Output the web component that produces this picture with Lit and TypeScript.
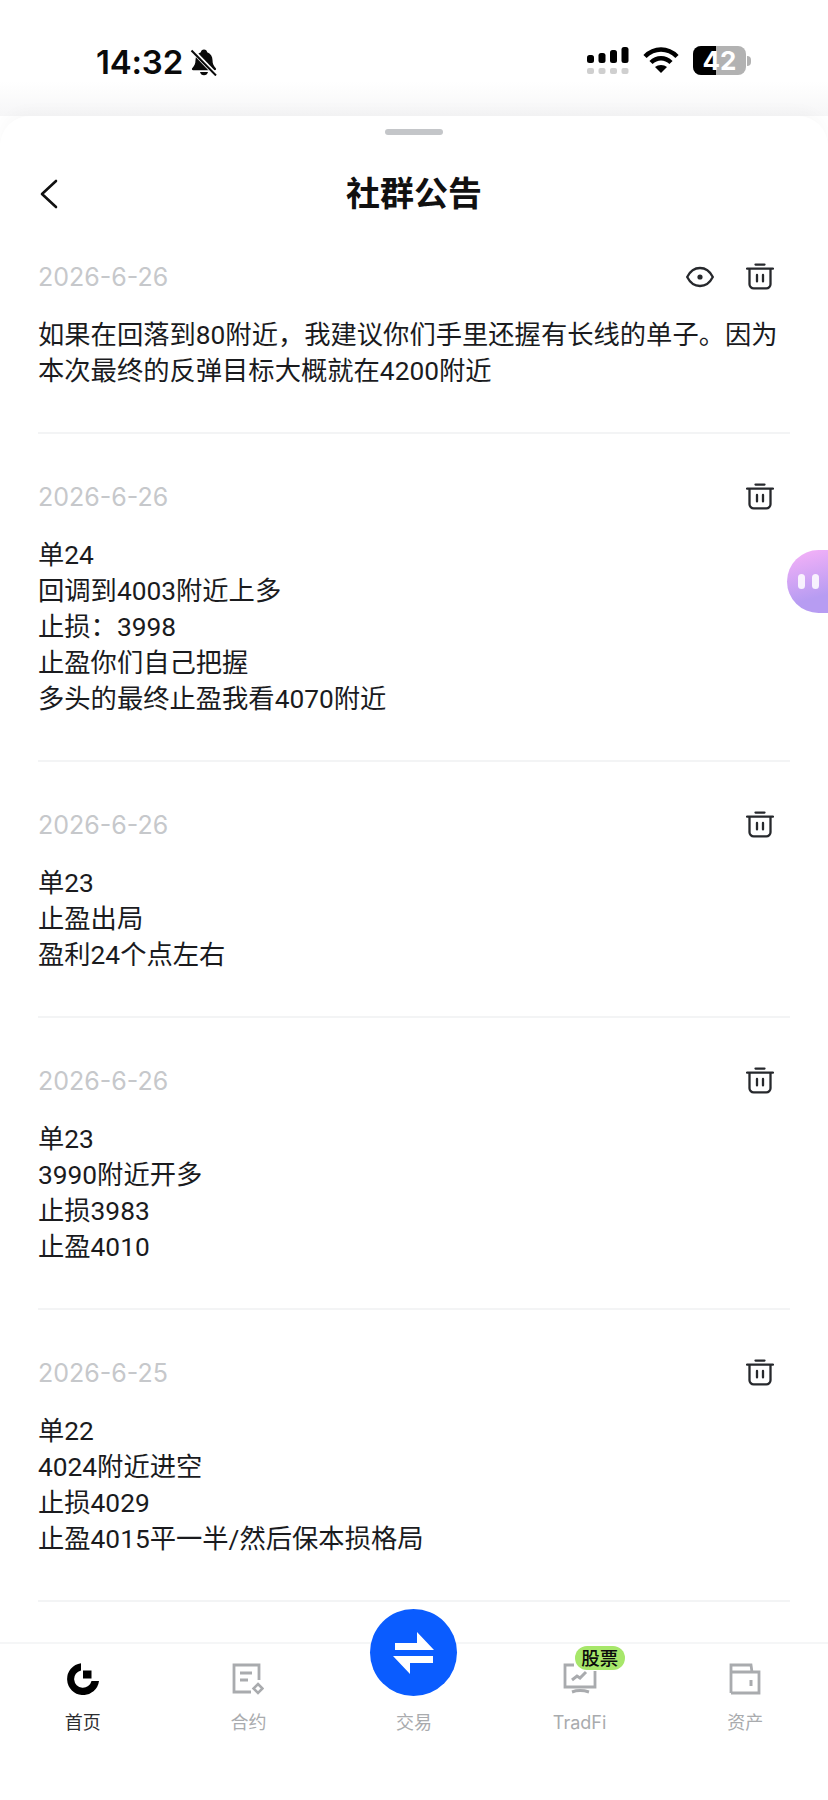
import { LitElement, html, css, svg } from "lit";
import { customElement } from "lit/decorators.js";

const items = [
  { date: "2026-6-26", eye: true, lines: ["如果在回落到80附近，我建议你们手里还握有长线的单子。因为本次最终的反弹目标大概就在4200附近"] },
  { date: "2026-6-26", lines: ["单24", "回调到4003附近上多", "止损：3998", "止盈你们自己把握", "多头的最终止盈我看4070附近"] },
  { date: "2026-6-26", lines: ["单23", "止盈出局", "盈利24个点左右"] },
  { date: "2026-6-26", lines: ["单23", "3990附近开多", "止损3983", "止盈4010"] },
  { date: "2026-6-25", lines: ["单22", "4024附近进空", "止损4029", "止盈4015平一半/然后保本损格局"] },
];

const trash = svg`<svg class="ic" width="28" height="28" viewBox="0 0 28 28" fill="none" stroke="#26282c" stroke-width="2.3" stroke-linecap="round" stroke-linejoin="round"><path d="M9.5 1.6h9M1 5.6h26M3.5 5.800v15.400a4.200 4.200 0 0 0 4.200 4.200h12.600a4.200 4.200 0 0 0 4.200-4.200V5.800M11 12v6.400M17 12v6.400"/></svg>`;
const eye = svg`<svg class="ic" width="28" height="22" viewBox="0 0 28 22" fill="none" stroke="#26282c" stroke-width="2.3"><path d="M1.200 11C4 5.400 8.600 2 14 2s10 3.400 12.800 9c-2.800 5.600-7.400 9-12.800 9S4 16.600 1.200 11Z"/><circle cx="14" cy="11" r="2.600" fill="#26282c" stroke="none"/></svg>`;

@customElement("app-root")
export class AppRoot extends LitElement {
  static styles = css`
    :host { display: block; width: 828px; height: 1800px; position: relative; overflow: hidden; background: #fff; font-family: Inter, "Noto Sans CJK SC", sans-serif; }
    .root { height: 1800px; display: flex; flex-direction: column; background: #fff; }
    .status { height: 116px; flex: none; display: flex; justify-content: space-between; background: linear-gradient(#fff 70%, #f6f6f7); }
    .left { display: flex; gap: 7px; padding: 44px 0 0 96px; align-items: flex-start; }
    .time { font-size: 33px; line-height: 37px; font-weight: 600; color: #0a0a0a; letter-spacing: -0.2px; }
    .bell { margin-top: 4px; }
    .right { display: flex; padding: 46px 0 0 0; margin-right: 82px; align-items: flex-start; gap: 14px; }
    .batt { position: relative; width: 53px; height: 29px; border-radius: 8px; overflow: hidden; background: #b2b2b2; display: flex; align-items: center; justify-content: center; color: #fff; font-size: 26px; font-weight: 700; }
    .batt i { position: absolute; left: 0; top: 0; bottom: 0; width: 23px; background: #000; }
    .batt span { position: relative; }
    .tip { position: absolute; left: 747px; top: 56px; width: 4px; height: 10px; border-radius: 0 4px 4px 0; background: #b2b2b2; }
    .sheet { flex: 1; min-height: 0; display: flex; flex-direction: column; background: #fff; border-radius: 30px 30px 0 0; box-shadow: 0 -6px 14px rgba(0,0,0,.025); overflow: hidden; }
    .handle { flex: none; width: 58px; height: 6px; border-radius: 3px; background: #c4c6c9; margin: 13px auto 0; }
    .head { flex: none; height: 72px; margin-top: 23px; display: flex; align-items: center; justify-content: center; position: relative; }
    .head h1 { margin: 0; font-size: 34px; font-weight: 600; color: #111; line-height: 44px; }
    .back { position: absolute; left: 38px; top: 21px; }
    .list { flex: 1; min-height: 0; overflow: hidden; padding: 0 38px; }
    .item { padding-top: 29px; padding-bottom: 43px; border-bottom: 2px solid #f3f4f5; }
    .item + .item { padding-top: 45px; }
    .meta { display: flex; align-items: center; justify-content: space-between; height: 36px; }
    .date { font-size: 25px; color: #c6c8cb; line-height: 36px; }
    .acts { display: flex; align-items: center; gap: 32px; margin-right: 16px; }
    .body { margin-top: 22px; font-family: Roboto, "Noto Sans CJK SC", sans-serif; font-size: 26.300px; line-height: 36px; color: #1a1b1e; }
    nav { flex: none; height: 156px; border-top: 2px solid #f5f6f7; display: grid; grid-template-columns: repeat(5, 1fr); position: relative; background: #fff; }
    .tab { display: flex; flex-direction: column; align-items: center; padding-top: 19px; font-size: 18px; line-height: 24px; color: #a9abae; position: relative; }
    .tab.on { color: #2c2d30; }
    .tab svg { display: block; margin-bottom: 16px; }
    .spacer { height: 32px; margin-bottom: 16px; }
    .fab { position: absolute; left: 50%; top: -35px; width: 87px; height: 87px; margin-left: -43.500px; border-radius: 50%; background: #0a5cff; display: flex; align-items: center; justify-content: center; }
    .fab svg { margin: 0; }
    .badge { position: absolute; left: 78px; top: 2px; width: 50px; height: 24px; border-radius: 12px; background: #a7e76a; color: #0b0b0b; font-size: 18.500px; line-height: 24px; text-align: center; font-weight: 500; }
    .bot { position: absolute; left: 787px; top: 550px; width: 41px; height: 63px; border-radius: 32px 0 0 32px; background: linear-gradient(165deg, #f8b2f8, #b79cf2 75%); display: flex; gap: 7px; align-items: center; padding-left: 11px; box-sizing: border-box; }
    .bot i { width: 7px; height: 15px; border-radius: 3.500px; background: #fff; opacity: .85; }
  `;

  render() {
    return html`<div class="root">
      <div class="status">
        <div class="left"><span class="time">14:32</span>
          <svg class="bell" width="28" height="28" viewBox="0 0 28 28"><path d="M14 1.500c1.800 0 3 1.200 3.200 2.700 3.400 1.100 5.300 4 5.300 7.800 0 4 1.200 6 3.300 8.200.6.7.3 2-1 2H3.200c-1.300 0-1.600-1.300-1-2C4.300 18 5.500 16 5.500 12c0-3.800 1.900-6.700 5.300-7.800.2-1.500 1.400-2.700 3.200-2.700ZM10 24h8c-.4 2-2 3.300-4 3.300S10.400 26 10 24Z" fill="#0a0a0a"/><path d="M2 2l24 25" stroke="#fff" stroke-width="4.500"/><path d="M1.500 2.500l24.500 25" stroke="#0a0a0a" stroke-width="2"/></svg>
        </div>
        <div class="right">
          <svg width="42" height="29" viewBox="0 0 42 29" fill="#000"><rect x="0" y="9" width="7" height="8" rx="2.500"/><rect x="11.500" y="7" width="7" height="10" rx="2.500"/><rect x="23" y="4" width="7" height="13" rx="2.500"/><rect x="34.500" y="1" width="7" height="16" rx="2.500"/><g fill="#cfcfcf"><rect x="0" y="22" width="7" height="6" rx="2"/><rect x="11.500" y="22" width="7" height="6" rx="2"/><rect x="23" y="22" width="7" height="6" rx="2"/><rect x="34.500" y="22" width="7" height="6" rx="2"/></g></svg>
          <svg width="36" height="28" viewBox="0 0 36 28" fill="none" stroke="#000" stroke-width="4.500"><path d="M2 10.500C6.500 6 12 3.500 18 3.500S29.500 6 34 10.500"/><path d="M8 16.500c2.800-2.700 6.200-4.200 10-4.200s7.200 1.500 10 4.200"/><path d="M18 27l-6-6c1.600-1.300 3.700-2 6-2s4.400.7 6 2l-6 6Z" fill="#000" stroke="none"/></svg>
          <div class="batt"><i></i><span>42</span></div>
        </div>
      </div>
      <div class="tip"></div>
      <div class="sheet">
        <div class="handle"></div>
        <div class="head">
          <svg class="back" width="20" height="30" viewBox="0 0 20 30" fill="none" stroke="#111" stroke-width="2.600" stroke-linecap="round" stroke-linejoin="round"><path d="M18 2 4 15l14 13"/></svg>
          <h1>社群公告</h1>
        </div>
        <div class="list">
          ${items.map(it => html`<div class="item">
            <div class="meta"><span class="date">${it.date}</span>
              <div class="acts">${it.eye ? eye : ""}${trash}</div></div>
            <div class="body">${it.lines.map(l => html`<div>${l}</div>`)}</div>
          </div>`)}
        </div>
      </div>
      <nav>
        <div class="tab on">
          <svg width="32" height="32" viewBox="0 0 32 32"><path d="M14 .2v7.200A8.800 8.800 0 1 0 24.500 18H32A16 16 0 1 1 14 .2Z" fill="#000"/><rect x="16" y="7.500" width="8.500" height="8" fill="#000"/></svg>
          首页
        </div>
        <div class="tab">
          <svg width="32" height="32" viewBox="0 0 32 32" fill="none" stroke="#a9abae" stroke-width="2.800"><path d="M27 17V2H2v27h17"/><path d="M8 10h12M8 17h8"/><path d="M26 21l4.500 4.500L26 30l-4.500-4.500Z" stroke-width="2.500"/></svg>
          合约
        </div>
        <div class="tab">
          <div class="spacer"></div>
          <div class="fab">
            <svg width="41" height="42" viewBox="0 0 41 42" fill="#fff"><path d="M2 11h22V0l17 18H2ZM0 24h40v7H17v11Z"/></svg>
          </div>
          交易
        </div>
        <div class="tab">
          <svg width="34" height="32" viewBox="0 0 34 32" fill="none" stroke="#a9abae" stroke-width="2.800"><path d="M11 2H2v22h30V8"/><path d="M9 29c5-1.800 11-1.800 17 0" stroke-width="3"/><path d="M9 17l5-4 3 2 6-6" stroke-width="3"/></svg>
          TradFi
          <span class="badge">股票</span>
        </div>
        <div class="tab">
          <svg width="32" height="32" viewBox="0 0 32 32" fill="none" stroke="#a9abae" stroke-width="2.800"><path d="M2 30V2h20l1 7H2M2 9h28v21H2"/><path d="M22 17v6" stroke-width="3"/></svg>
          资产
        </div>
      </nav>
      <div class="bot"><i></i><i></i></div>
    </div>`;
  }
}
